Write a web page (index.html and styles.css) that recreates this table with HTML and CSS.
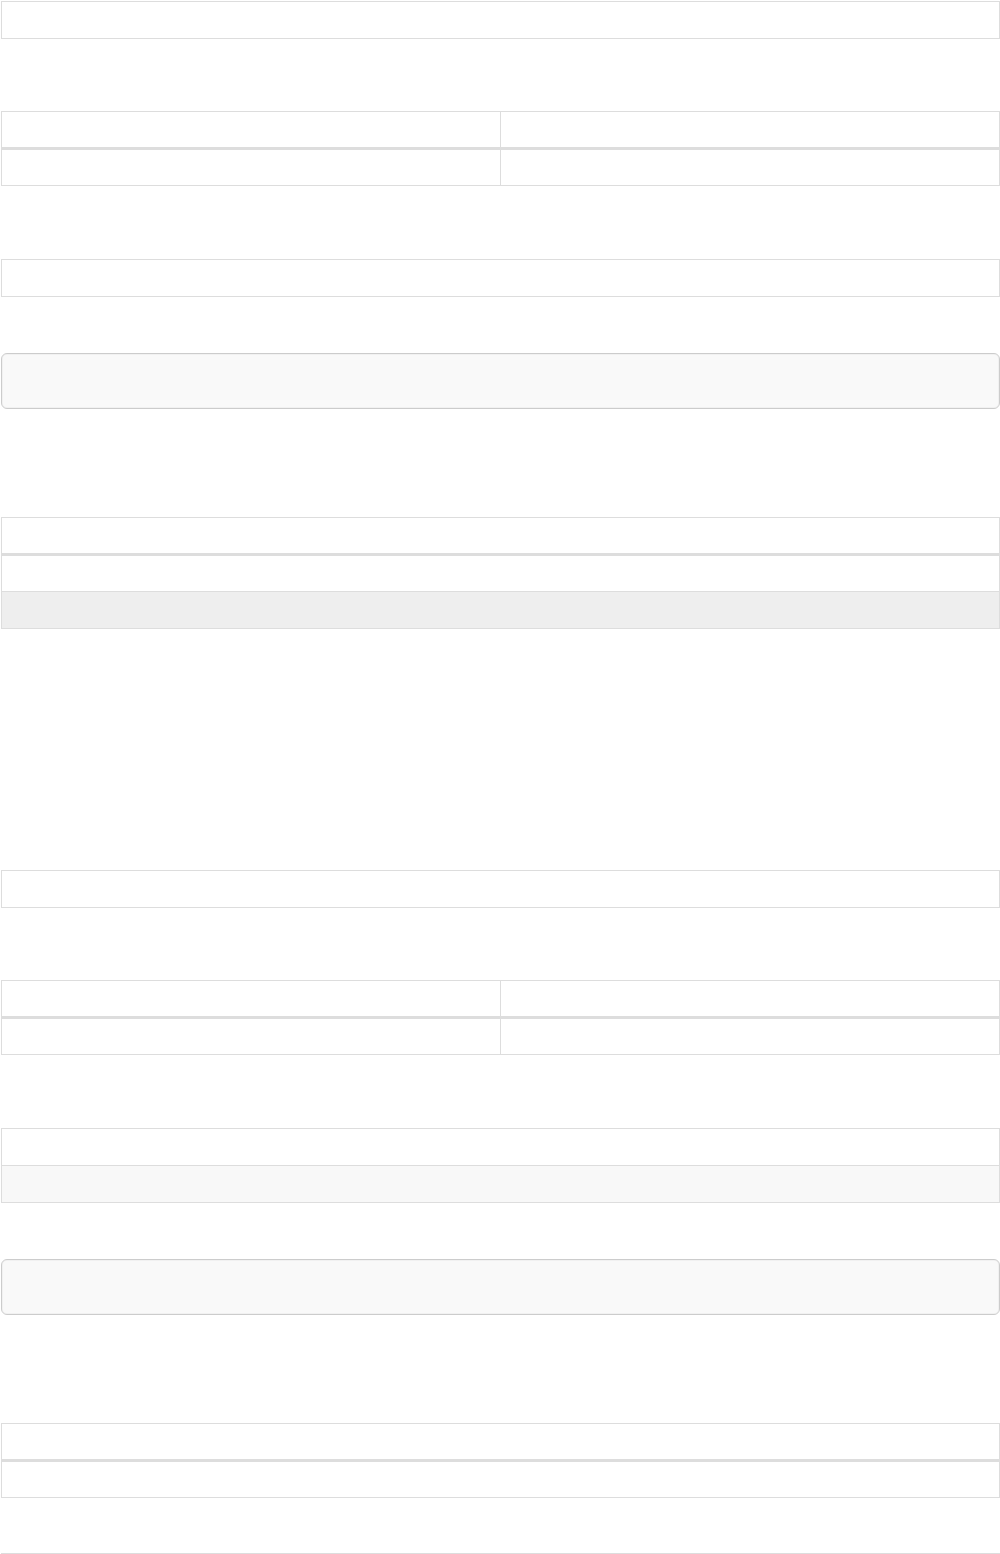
FILE: index.html
```html
<!DOCTYPE html>
<html lang="en">
<head>
<meta charset="utf-8">
<title>Tables</title>
<link rel="stylesheet" href="styles.css">
</head>
<body>
<main class="page">
  <div class="tbl sec-a"><div class="row"><div class="cell"></div></div></div>

  <div class="tbl sec-b two">
    <div class="row head"><div class="cell"></div><div class="cell"></div></div>
    <div class="row"><div class="cell"></div><div class="cell"></div></div>
  </div>

  <div class="tbl sec-c"><div class="row"><div class="cell"></div></div></div>

  <div class="well sec-d"></div>

  <div class="tbl sec-e">
    <div class="row head"><div class="cell"></div></div>
    <div class="row"><div class="cell"></div></div>
    <div class="row grey"><div class="cell"></div></div>
  </div>

  <div class="tbl sec-f"><div class="row"><div class="cell"></div></div></div>

  <div class="tbl sec-g two">
    <div class="row head"><div class="cell"></div><div class="cell"></div></div>
    <div class="row"><div class="cell"></div><div class="cell"></div></div>
  </div>

  <div class="tbl sec-h">
    <div class="row"><div class="cell"></div></div>
    <div class="row light"><div class="cell"></div></div>
  </div>

  <div class="well sec-i"></div>

  <div class="tbl sec-j">
    <div class="row head"><div class="cell"></div></div>
    <div class="row"><div class="cell"></div></div>
  </div>

  <div class="tbl sec-k"><div class="row"><div class="cell"></div></div></div>
</main>
</body>
</html>
```

FILE: styles.css
```css
html {
  overflow: hidden;
}
body {
  margin: 0;
  background: #fff;
  font-family: "Liberation Sans", Arial, sans-serif;
}
.page {
  display: flex;
  flex-direction: column;
  padding: 1px 0 0 1px;
}
.tbl {
  border: 1px solid #ddd;
  width: 999px;
  box-sizing: border-box;
  flex: none;
}
.row {
  display: grid;
  grid-template-columns: 1fr;
  height: 36px;
}
.row + .row {
  border-top: 1px solid #ddd;
}
.row.head {
  height: 35px;
  border-bottom: 2px solid #ddd;
}
.head ~ .row {
  height: 35px;
}
.head ~ .row.grey {
  height: 36px;
}
.two .row {
  grid-template-columns: 498px 1fr;
}
.two .cell + .cell {
  border-left: 1px solid #ddd;
}
.grey {
  background: #eee;
}
.light {
  background: #f8f8f8;
}
.well {
  width: 999px;
  height: 56px;
  box-sizing: border-box;
  border: 1px solid #ccc;
  border-radius: 6px;
  background: #f9f9f9;
  box-shadow: inset 0 0 0 1px rgba(0, 0, 0, 0.03);
  flex: none;
}
.sec-b { margin-top: 72px; }
.sec-c { margin-top: 73px; }
.sec-d { margin-top: 56px; }
.sec-e { margin-top: 108px; }
.sec-f { margin-top: 241px; }
.sec-g { margin-top: 72px; }
.sec-h { margin-top: 73px; }
.sec-i { margin-top: 56px; }
.sec-j { margin-top: 108px; }
.sec-k { margin-top: 55px; }
```
